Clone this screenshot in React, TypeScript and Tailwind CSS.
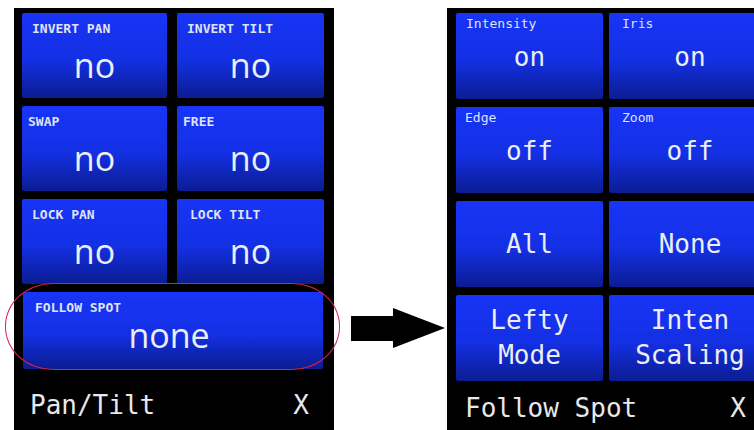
import React from 'react';

const mono = "font-['DejaVu_Sans_Mono',monospace]";
const sans = "font-['Open_Sans','DejaVu_Sans',sans-serif]";
const tileBg = 'bg-linear-to-b from-[#1834f6] via-[#1430e4] via-55% to-[#0b1c92] rounded-[2px]';

const panTilt = [
    { label: 'INVERT PAN', value: 'no', pl: 'pl-[10px]' },
    { label: 'INVERT TILT', value: 'no', pl: 'pl-[10px]' },
    { label: 'SWAP', value: 'no', pl: 'pl-[6px]' },
    { label: 'FREE', value: 'no', pl: 'pl-[6px]' },
    { label: 'LOCK PAN', value: 'no', pl: 'pl-[10px]' },
    { label: 'LOCK TILT', value: 'no', pl: 'pl-[13px]' },
];

const followSpot = [
    { label: 'Intensity', value: 'on', pl: 'pl-[10px]' },
    { label: 'Iris', value: 'on', pl: 'pl-[13px]' },
    { label: 'Edge', value: 'off', pl: 'pl-[9px]' },
    { label: 'Zoom', value: 'off', pl: 'pl-[13px]' },
];

function PanTiltTile({ label, value, pl }: { label: string; value: string; pl: string }) {
    return (
        <div className={`${tileBg} h-[85px] flex flex-col pt-[9px]`}>
            <div className={`${mono} ${pl} font-bold text-[13px] leading-[13px] text-[#dfe3f5]`}>{label}</div>
            <div className={`${sans} mt-[13px] text-center text-[34px] leading-[34px] text-[#eceef6]`}>{value}</div>
        </div>
    );
}

function SpotTile({ label, value, pl }: { label: string; value: string; pl: string }) {
    return (
        <div className={`${tileBg} h-[86px] flex flex-col pt-[4px]`}>
            <div className={`${mono} ${pl} text-[13px] leading-[13px] text-[#dfe3f5]`}>{label}</div>
            <div className={`${mono} mt-[14px] text-center text-[26px] leading-[26px] text-[#eceef6]`}>{value}</div>
        </div>
    );
}

function ActionTile({ lines }: { lines: string[] }) {
    return (
        <div className={`${tileBg} h-[86px] flex flex-col items-center justify-center`}>
            {lines.map((l) => (
                <div key={l} className={`${mono} text-[26px] leading-[35px] text-[#eceef6]`}>
                    {l}
                </div>
            ))}
        </div>
    );
}

export default function App() {
    return (
        <div className="relative w-[754px] h-[430px] overflow-hidden bg-white flex pl-[14px] pt-[8px]">
            {/* Pan/Tilt panel */}
            <div className="w-[320px] h-[422px] shrink-0 bg-black flex flex-col pl-[8px] pt-[5px]">
                <div className="grid grid-cols-[145px_147px] gap-x-[10px] gap-y-[8px]">
                    {panTilt.map((t) => (
                        <PanTiltTile key={t.label} {...t} />
                    ))}
                </div>
                <div className={`${tileBg} mt-[8px] ml-[1px] w-[300px] h-[77px] flex flex-col pt-[9px]`}>
                    <div className={`${mono} pl-[12px] font-bold text-[13px] leading-[13px] text-[#dfe3f5]`}>FOLLOW SPOT</div>
                    <div className={`${sans} mt-[4px] pr-[8px] text-center text-[34px] leading-[34px] text-[#eceef6]`}>none</div>
                </div>
                <div className={`${mono} mt-[21px] flex justify-between pl-[8px] pr-[25px] text-[26px] leading-[30px] text-[#e8e8ea]`}>
                    <span>Pan/Tilt</span>
                    <span>X</span>
                </div>
            </div>

            {/* Arrow */}
            <div className="w-[113px] shrink-0">
                <svg className="mt-[300px] ml-[17px]" width="94" height="40" viewBox="0 0 94 40">
                    <polygon points="0,8 42,8 42,0 94,20 42,40 42,33 0,33" fill="#000" />
                </svg>
            </div>

            {/* Follow Spot panel, cut off by the right edge */}
            <div className="w-[340px] h-[422px] shrink-0 bg-black flex flex-col pl-[9px] pt-[5px]">
                <div className="grid grid-cols-[147px_162px] gap-x-[6px] gap-y-[8px]">
                    {followSpot.map((t) => (
                        <SpotTile key={t.label} {...t} />
                    ))}
                    <ActionTile lines={['All']} />
                    <ActionTile lines={['None']} />
                    <ActionTile lines={['Lefty', 'Mode']} />
                    <ActionTile lines={['Inten', 'Scaling']} />
                </div>
                <div className={`${mono} mt-[12px] w-[290px] flex justify-between pl-[9px] text-[26px] leading-[30px] text-[#e8e8ea]`}>
                    <span>Follow Spot</span>
                    <span>X</span>
                </div>
            </div>

            {/* highlight ring */}
            <div className="absolute left-[5px] top-[283px] w-[335px] h-[87px] rounded-[48px/43px] border border-[#d3224c] pointer-events-none" />
        </div>
    );
}
